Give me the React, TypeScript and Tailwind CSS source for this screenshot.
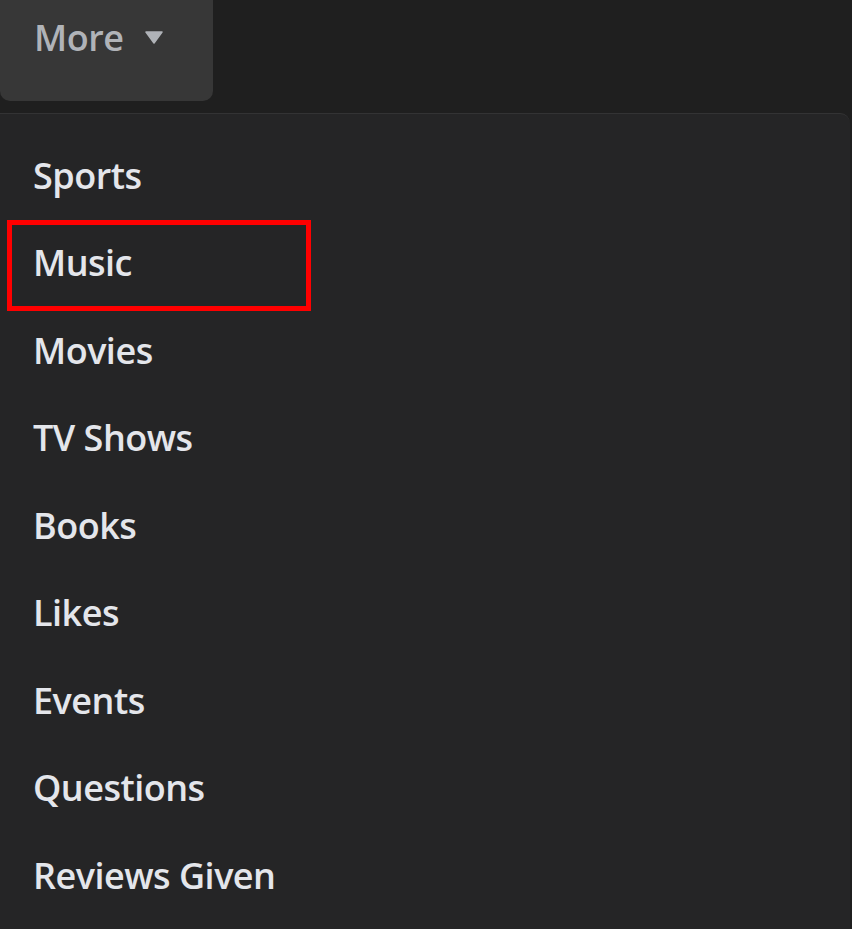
import React from "react";

const items = ["Sports", "Music", "Movies", "TV Shows", "Books", "Likes", "Events", "Questions", "Reviews Given"];

export default function App() {
  return (
    <div
      className="w-[852px] h-[929px] bg-[#1f1f1f] overflow-hidden"
      style={{ fontFamily: '"Open Sans", "Noto Sans", sans-serif' }}
    >
      <div className="h-[101px] w-[213px] bg-[#373737] rounded-b-[10px] flex items-start pl-[34px]">
        <span className="text-[36px] leading-[76px] font-semibold text-[#b0b3b8] tracking-[-0.5px]">More</span>
        <svg className="ml-[22px] mt-[31px]" width="18" height="13" viewBox="0 0 18 13">
          <path d="M1 1 H17 L9 12 Z" fill="#b0b3b8" stroke="#b0b3b8" strokeWidth="1.5" strokeLinejoin="round" />
        </svg>
      </div>
      <div className="mt-[12px] w-[850px] h-[830px] bg-[#252526] border-t border-[#333334] rounded-tr-[10px] pt-[18px]">
        {items.map((t) => (
          <div key={t} className="relative h-[87.5px] flex items-center pl-[33px]">
            {t === "Music" && (
              <div className="absolute left-[7px] top-0 w-[304px] h-[91px] border-[5px] border-[#ff0000]" />
            )}
            <span className="relative text-[36px] font-semibold text-[#e4e6eb] tracking-[-0.5px]">{t}</span>
          </div>
        ))}
      </div>
    </div>
  );
}
